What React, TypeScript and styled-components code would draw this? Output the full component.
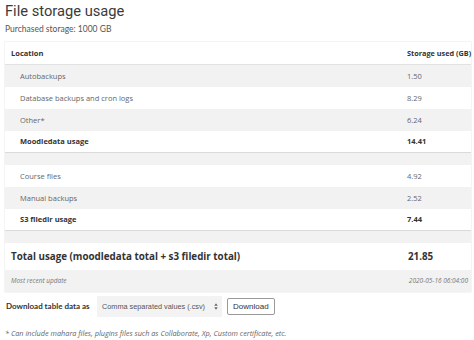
import React from 'react';
import styled, { createGlobalStyle } from 'styled-components';

const GlobalStyle = createGlobalStyle`
  html, body {
    margin: 0;
    padding: 0;
    background: #ffffff;
  }
  body {
    font-family: 'Open Sans', 'Liberation Sans', sans-serif;
    color: #333;
  }
`;

type Row = {
  label: string;
  value: string;
  kind: 'item' | 'sum' | 'spacer';
  shade: boolean;
};

const rows: Row[] = [
  { label: 'Autobackups', value: '1.50', kind: 'item', shade: true },
  { label: 'Database backups and cron logs', value: '8.29', kind: 'item', shade: false },
  { label: 'Other*', value: '6.24', kind: 'item', shade: true },
  { label: 'Moodledata usage', value: '14.41', kind: 'sum', shade: false },
  { label: '', value: '', kind: 'spacer', shade: true },
  { label: 'Course files', value: '4.92', kind: 'item', shade: false },
  { label: 'Manual backups', value: '2.52', kind: 'item', shade: true },
  { label: 'S3 filedir usage', value: '7.44', kind: 'sum', shade: false },
  { label: '', value: '', kind: 'spacer', shade: true },
];

export default function App() {
  return (
    <Page>
      <GlobalStyle />
      <Title>File storage usage</Title>
      <Purchased>Purchased storage: 1000 GB</Purchased>
      <Table>
        <colgroup>
          <col />
          <col style={{ width: 64 }} />
        </colgroup>
        <thead>
          <tr>
            <HeadCell>Location</HeadCell>
            <HeadCell className="value">Storage used (GB)</HeadCell>
          </tr>
        </thead>
        <tbody>
          {rows.map((r, i) =>
            r.kind === 'spacer' ? (
              <SpacerRow key={i}>
                <td colSpan={2} />
              </SpacerRow>
            ) : (
              <DataRow key={i} $shade={r.shade} $sum={r.kind === 'sum'}>
                <LabelCell>{r.label}</LabelCell>
                <ValueCell>{r.value}</ValueCell>
              </DataRow>
            )
          )}
          <TotalRow>
            <td>Total usage (moodledata total + s3 filedir total)</td>
            <td className="value">21.85</td>
          </TotalRow>
          <UpdateRow>
            <td>Most recent update</td>
            <td className="value">2020-05-16 06:04:00</td>
          </UpdateRow>
        </tbody>
      </Table>
      <DownloadForm>
        <DownloadLabel>Download table data as</DownloadLabel>
        <FormatSelect>
          <span>Comma separated values (.csv)</span>
          <Caret>
            <svg width="4" height="7" viewBox="0 0 4 7">
              <path d="M2 0.3 L3.7 2.8 H0.3 Z M2 6.7 L3.7 4.2 H0.3 Z" fill="#666" />
            </svg>
          </Caret>
        </FormatSelect>
        <DownloadButton>Download</DownloadButton>
      </DownloadForm>
      <Footnote>
        * Can include mahara files, plugins files such as Collaborate, Xp, Custom certificate, etc.
      </Footnote>
    </Page>
  );
}

const Page = styled.div`
  width: 474px;
  height: 340px;
  overflow: hidden;
  padding: 0 5px;
  box-sizing: border-box;
`;

const Title = styled.h2`
  margin: 0;
  padding-top: 2px;
  font-family: Roboto, 'Liberation Sans', sans-serif;
  font-weight: 400;
  font-size: 14.7px;
  line-height: 18px;
  color: #3a3a3a;
`;

const Purchased = styled.div`
  margin-top: 3px;
  font-family: Lato, 'Liberation Sans', sans-serif;
  font-size: 8.5px;
  line-height: 12px;
  color: #555;
`;

const Table = styled.table`
  margin-top: 7px;
  width: 466px;
  table-layout: fixed;
  border-collapse: collapse;
  box-shadow: 0 0 1px rgba(0, 0, 0, 0.25);
  font-size: 7.5px;
  color: #555;
  white-space: nowrap;

  .value {
    text-align: left;
  }
`;

const HeadCell = styled.th`
  height: 22px;
  padding: 0 0 0 6px;
  text-align: left;
  font-weight: 700;
  color: #333;
  border-bottom: 1px solid #e2e2e2;
  &.value {
    padding-left: 0;
    font-size: 7.3px;
  }
`;

const DataRow = styled.tr<{ $shade: boolean; $sum: boolean }>`
  height: 22px;
  background: ${({ $shade }) => ($shade ? '#f2f2f2' : '#ffffff')};
  font-weight: ${({ $sum }) => ($sum ? 700 : 400)};
  color: ${({ $sum }) => ($sum ? '#333' : '#666')};
  border-bottom: ${({ $sum }) => ($sum ? '1px solid #dadada' : 'none')};
`;

const LabelCell = styled.td`
  padding: 0 0 0 15px;
`;

const ValueCell = styled.td`
  padding: 0;
`;

const SpacerRow = styled.tr`
  height: 12px;
  background: #f2f2f2;
`;

const TotalRow = styled.tr`
  height: 27px;
  background: #fff;
  font-size: 9.8px;
  font-weight: 700;
  color: #333;

  td:first-child {
    padding-left: 6px;
  }
`;

const UpdateRow = styled.tr`
  height: 22px;
  background: #f2f2f2;
  font-style: italic;
  font-size: 6.5px;
  color: #777;

  td:first-child {
    padding-left: 6px;
  }
  td.value {
    text-align: right;
    padding-right: 3px;
  }
`;

const DownloadForm = styled.div`
  display: flex;
  align-items: center;
  margin-top: 4px;
  height: 21px;
`;

const DownloadLabel = styled.span`
  font-family: Lato, 'Liberation Sans', sans-serif;
  font-weight: 700;
  font-size: 8px;
  color: #333;
  width: 91px;
  margin-left: 1px;
  white-space: nowrap;
`;

const FormatSelect = styled.div`
  display: flex;
  align-items: center;
  justify-content: space-between;
  width: 125px;
  height: 21px;
  box-sizing: border-box;
  padding: 0 4px 0 5px;
  background: #f3f3f3;
  font-family: 'Liberation Sans', sans-serif;
  font-size: 7.3px;
  color: #555;
  white-space: nowrap;
`;

const Caret = styled.span`
  display: flex;
  align-items: center;
`;

const DownloadButton = styled.button`
  margin-left: 5px;
  height: 17px;
  padding: 0 5px;
  background: #fff;
  border: 1px solid #999;
  border-radius: 2px;
  font-family: 'Liberation Sans', sans-serif;
  font-size: 8px;
  color: #333;
`;

const Footnote = styled.div`
  margin-top: 11px;
  font-style: italic;
  font-size: 7.3px;
  color: #666;
  white-space: nowrap;
`;
